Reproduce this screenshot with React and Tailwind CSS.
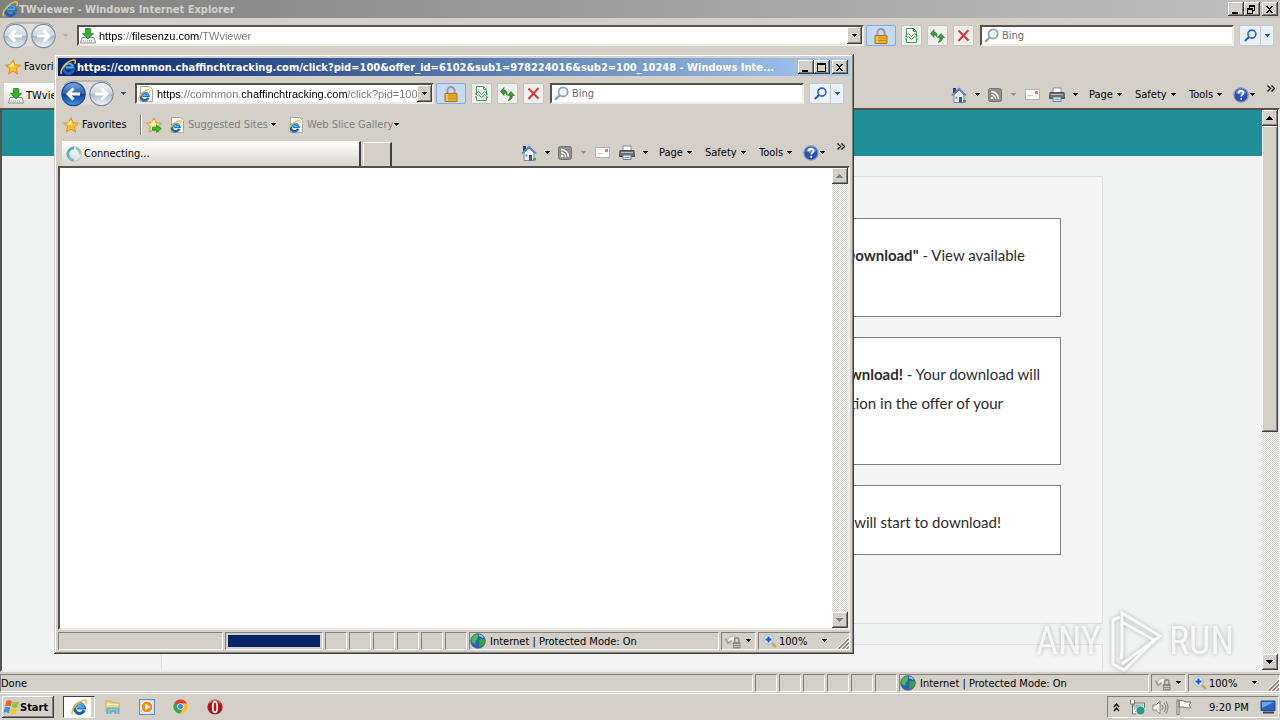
import clsx from "clsx";

const RAISED =
  "bg-[#d4d0c8] shadow-[inset_-1px_-1px_#404040,inset_1px_1px_#fff,inset_-2px_-2px_#808080]";
const SUNKEN = "border border-t-[#808080] border-l-[#808080] border-r-white border-b-white";
const SUNKEN_DEEP =
  "border-2 border-t-[#55524e] border-l-[#55524e] border-r-[#eeece8] border-b-[#eeece8]";
const DITHER =
  "bg-[repeating-conic-gradient(#ffffff_0_25%,#d4d0c8_0_50%)] bg-[length:2px_2px]";

/* ---------- icons ---------- */

function Caret({ className = "text-black" }) {
  return (
    <svg width="7" height="4" viewBox="0 0 7 4" className={clsx("shrink-0", className)} shapeRendering="crispEdges">
      <path d="M1 0h5v1H1zM2 1h3v1H2zM3 2h1v1H3z" fill="currentColor" />
    </svg>
  );
}

function IeIcon({ size = 16, page = false }) {
  return (
    <svg width={size} height={size} viewBox="0 0 16 16" className="shrink-0">
      {page && <path d="M2.5.5h9l3 3v12h-12z" fill="#fff" stroke="#a8a8a8" />}
      <g transform={page ? "translate(0 3) scale(.78)" : undefined}>
        <path
          d="M13.200 11.200A4.900 4.900 0 1 1 13.400 8.800H6"
          fill="none"
          stroke="#1a63bb"
          strokeWidth="3.200"
        />
        <path d="M4.100 8.500A4.800 4.800 0 0 1 13 7.200M6 8.400h7.500" fill="none" stroke="#4fb2f0" strokeWidth="1.700" />
        <path
          d="M1.800 15C-.6 13 3 6.400 8.400 2.900 12 .6 15.300.2 15.400 2.200c0 .9-.3 1.800-.8 2.600"
          fill="none"
          stroke="#f0bf2c"
          strokeWidth="1.600"
        />
      </g>
    </svg>
  );
}

function DownloadIcon() {
  return (
    <svg width="16" height="16" viewBox="0 0 16 16" className="shrink-0">
      <path d="M2 9.500h12l1.500 5.500H.5z" fill="#f4f4f4" stroke="#8d8d8d" />
      <path d="M3 13h10" stroke="#8aa0a0" strokeDasharray="1 1" />
      <path d="M5.500.5h5v5h3L8 11 2.500 5.500h3z" fill="#35b22d" stroke="#1f8a1c" strokeWidth=".8" />
    </svg>
  );
}

function StarIcon({ add = false }) {
  return (
    <svg width="16" height="16" viewBox="0 0 16 16" className="shrink-0">
      <path
        d="M8 .8l2.100 4.900 5.300.5-4 3.500 1.200 5.300L8 12.200 3.400 15l1.200-5.300-4-3.500 5.300-.5z"
        fill={add ? "#fbe9a0" : "#fbc02d"}
        stroke="#d98c14"
        strokeWidth=".9"
      />
      <path d="M8 3l1.300 3.500L8 8 4 7z" fill="#fff2a8" />
      {add && <path d="M6.500 10.200h4V8l4.800 3.700-4.800 3.700v-2.200h-4z" fill="#3dbb34" stroke="#1d8b1d" strokeWidth=".8" />}
    </svg>
  );
}

function TravelButtons({ active }) {
  return (
    <svg width="56" height="28" viewBox="0 0 56 28" className="shrink-0">
      <defs>
        <linearGradient id="orbLight" x1="0" y1="0" x2="0" y2="1">
          <stop offset="0" stopColor="#f4f6f9" />
          <stop offset=".48" stopColor="#ccd5df" />
          <stop offset=".5" stopColor="#a9b8c8" />
          <stop offset="1" stopColor="#f2f8fd" />
        </linearGradient>
        <linearGradient id="orbBlue" x1="0" y1="0" x2="0" y2="1">
          <stop offset="0" stopColor="#7ea7dc" />
          <stop offset=".48" stopColor="#2c62b4" />
          <stop offset=".5" stopColor="#0e3c8e" />
          <stop offset="1" stopColor="#3f9be6" />
        </linearGradient>
      </defs>
      <path d="M13.500 1h28a13 13 0 0 1 0 26c-5 0-9-3-14-3s-9 3-14 3a13 13 0 0 1 0-26z" fill="#dedcd8" />
      <path d="M4 5C7 2 10 1 13.500 1h28C45 1 48 2 51 5" fill="none" stroke="#9b9894" />
      <circle cx="13.500" cy="14" r="11.700" fill={active ? "url(#orbBlue)" : "url(#orbLight)"} stroke={active ? "#1b4a94" : "#7f8fa3"} strokeWidth="1.200" />
      <circle cx="41.500" cy="14" r="11.700" fill="url(#orbLight)" stroke="#7f8fa3" strokeWidth="1.200" />
      <path d="M20 14H8.500M13.500 8.500L8 14l5.500 5.500" fill="none" stroke="#fff" strokeWidth="3" />
      <path d="M35 14h11.500M41.500 8.500L47 14l-5.500 5.500" fill="none" stroke="#fff" strokeWidth="3" />
    </svg>
  );
}

function LockIcon() {
  return (
    <svg width="14" height="16" viewBox="0 0 14 16">
      <path d="M3.500 8V4.500a3.500 3.500 0 0 1 7 0V8" fill="none" stroke="#9c9a94" strokeWidth="2" />
      <path d="M1 7.500h12v8H1z" fill="#eeb02a" stroke="#a87412" />
      <path d="M1.500 10h11M1.500 12.500h11" stroke="#c98a18" />
      <path d="M3 8v7" stroke="#ffe18a" />
    </svg>
  );
}

function CompatIcon() {
  return (
    <svg width="13" height="15" viewBox="0 0 13 15">
      <path d="M1.500 9V.5h7l3 3V9M1.500 11v3.500h10V11" fill="#f3fbf2" stroke="#4aa052" />
      <path d="M8.500.5v3h3" fill="none" stroke="#4aa052" />
      <path d="M0 8.500l3.500-3 3 3 3-3 3.500 3M0 11.500l3.500-3 3 3 3-3 3.500 3" fill="none" stroke="#3f9a48" />
    </svg>
  );
}

function RefreshIcon() {
  return (
    <svg width="15" height="14" viewBox="0 0 15 14" fill="#3a9a35" stroke="#1f7522" strokeWidth=".6">
      <path d="M4 .5L.5 4.500 4 8.500V6c1.500 0 2.500.5 3 2 .5-3.500-1-5-3-5z" />
      <path d="M11 4.500l3.500 4H12.500c0 3-1.500 4.500-4.500 5 1.500-1 2-2.500 2-5H7.500z" />
    </svg>
  );
}

function StopIcon() {
  return (
    <svg width="13" height="13" viewBox="0 0 13 13">
      <path d="M1.500 1.500l10 10M11.500 1l-10 11" fill="none" stroke="#d33a3a" strokeWidth="2" />
    </svg>
  );
}

function Magnifier({ color, size = 14 }) {
  return (
    <svg width={size} height={size} viewBox="0 0 14 14" className="shrink-0">
      <circle cx="8.500" cy="5.500" r="4.300" fill="#eef6fc" stroke={color} strokeWidth="1.700" />
      <path d="M5.300 8.700L1 13" stroke={color} strokeWidth="2.200" />
    </svg>
  );
}

function HomeIcon() {
  return (
    <svg width="16" height="16" viewBox="0 0 16 16">
      <path d="M2 1h3v5H2z" fill="#24409c" />
      <path d="M3 8l5-5 5 5v7.500H3z" fill="#eef2fb" stroke="#7486b4" />
      <path d="M.8 8.500L8 1.500l7.200 7" fill="none" stroke="#5c7cc8" strokeWidth="1.600" />
      <path d="M8 10h3v5.500H8z" fill="#33599c" />
      <path d="M4.500 9.500h2v2h-2z" fill="#6f93cf" />
      <path d="M12 13h3v2.500h-3z" fill="#4c9a4e" />
    </svg>
  );
}

function RssIcon() {
  return (
    <svg width="14" height="14" viewBox="0 0 14 14">
      <rect x=".5" y=".5" width="13" height="13" rx="2" fill="#909090" stroke="#747474" />
      <circle cx="4" cy="10" r="1.300" fill="#fff" />
      <path d="M3 6.500A4.500 4.500 0 0 1 7.500 11M3 3.500A7.500 7.500 0 0 1 10.500 11" fill="none" stroke="#fff" strokeWidth="1.500" />
    </svg>
  );
}

function MailIcon() {
  return (
    <svg width="15" height="11" viewBox="0 0 15 11">
      <rect x=".5" y=".5" width="14" height="10" fill="#fbfbfb" stroke="#b4b0b4" />
      <path d="M10 2h3v3h-3z" fill="#e07a72" />
      <path d="M3 6.500h5" stroke="#c9c5d4" />
    </svg>
  );
}

function PrinterIcon() {
  return (
    <svg width="16" height="16" viewBox="0 0 16 16">
      <path d="M4 1h8v5H4z" fill="#fff" stroke="#8b8b8b" />
      <path d="M1 5.500h14l.5 6H.5z" fill="#6b6e74" stroke="#4c4e52" />
      <path d="M2 7.500h12" stroke="#b9bcc2" />
      <path d="M4 10h8v4.500H4z" fill="#d3e7f6" stroke="#6f7d88" />
      <path d="M5.500 12.500h5" stroke="#5ea3cf" />
    </svg>
  );
}

function HelpIcon() {
  return (
    <svg width="16" height="16" viewBox="0 0 16 16">
      <circle cx="8" cy="8" r="7.200" fill="#2a50b8" stroke="#8c9cc4" strokeWidth="1.200" />
      <path d="M3 6a5.200 5.200 0 0 1 10 0c-3 2-7 2-10 0z" fill="#6f92e2" />
      <path d="M5.600 6.200c0-3.200 4.900-3 4.900-.3 0 1.700-2.300 1.800-2.300 3.600M8.200 11v1.800" fill="none" stroke="#fff" strokeWidth="1.700" />
    </svg>
  );
}

function SpinnerIcon() {
  return (
    <svg width="16" height="16" viewBox="0 0 16 16" fill="none" strokeWidth="2.400">
      <circle cx="8" cy="8" r="6" stroke="#d5eef2" />
      <path d="M8 2a6 6 0 0 0-5 9.300" stroke="#4fb5b0" />
      <path d="M3 11.300A6 6 0 0 0 8 14" stroke="#5dc7e4" />
      <path d="M10 2.400A6 6 0 0 1 14 8" stroke="#86d0c4" />
      <circle cx="8" cy="8" r="7.300" stroke="#8aa5a8" strokeWidth=".6" />
    </svg>
  );
}

function GlobeIcon() {
  return (
    <svg width="16" height="16" viewBox="0 0 16 16" className="shrink-0">
      <circle cx="8" cy="8" r="7.300" fill="#2566b8" stroke="#3e5f8c" strokeWidth=".8" />
      <path d="M3 3c2-1.800 5-2 5.500-1S7 4 7.500 5.500 5 7 5.500 9 4 11 2.500 9.500 1 6 3 3z" fill="#4fbd4a" />
      <path d="M10 6.500c2-1.500 4.500-.5 5 1s-1.500 5.500-4 6-2-2.500-1.500-3.500S8.500 8 10 6.500z" fill="#3aa33c" />
      <path d="M9 2.500a4 4 0 0 1 4 2" stroke="#a9d6f7" strokeWidth="1.400" fill="none" />
    </svg>
  );
}

function ProtectedIcon() {
  return (
    <svg width="16" height="15" viewBox="0 0 16 15">
      <path d="M2 9C2.500 4 6 1.500 10 2v7z" fill="#f2f1ef" stroke="#b5b1ab" />
      <path d="M.5 4.500L3 9l4-2.500" fill="none" stroke="#a9a6a1" strokeWidth="1.800" />
      <path d="M9.500 8.500V6a2.200 2.200 0 0 1 4.400 0v2.500" fill="none" stroke="#8d8a85" strokeWidth="1.400" />
      <path d="M8 8h7.500v6.500H8z" fill="#8e8b86" />
      <path d="M9 10.500h5.500M9 12.500h5.500" stroke="#c9c6c1" />
    </svg>
  );
}

function ZoomIcon() {
  return (
    <svg width="14" height="14" viewBox="0 0 14 14" className="shrink-0">
      <path d="M8.500 8.500l4.500 4.500" stroke="#c89a62" strokeWidth="2.200" />
      <circle cx="5.500" cy="5.500" r="4.800" fill="#dcecf9" stroke="#9fb6cc" />
      <path d="M5.500 2.500v6M2.500 5.500h6" stroke="#1c58c4" strokeWidth="2" />
    </svg>
  );
}

function SizeGrip() {
  return (
    <svg width="12" height="12" viewBox="0 0 12 12" className="shrink-0">
      <path d="M0 12L12 0M4 12l8-8M8 12l4-4" stroke="#fff" />
      <path d="M1.500 12L12 1.500M5.500 12L12 5.500M9.500 12L12 9.500" stroke="#808080" strokeWidth="1.400" />
    </svg>
  );
}

/* ---------- window parts ---------- */

const CAPTION_GLYPHS = {
  Minimize: "M4 9h6v2H4z",
  Maximize: "M3 2h9v9H3zM4 4v6h7V4z",
  Restore: "M5 2h6v6H9V7h1V4H6v1H5zM3 5h6v6H3zM4 7v3h4V7z",
  Close: "M4 3h2v1h1v1h1V4h1V3h2v1h-1v1H9v1H8v1h1v1h1v1h1v1H9V9H8V8H7v1H6v1H4V9h1V8h1V7h1V6H6V5H5V4H4z",
};

function CaptionButton({ kind, className }) {
  return (
    <button aria-label={kind} className={clsx("h-[14px] w-4 shrink-0", RAISED, className)}>
      <svg width="15" height="13" viewBox="0 0 15 13" fillRule="evenodd" shapeRendering="crispEdges">
        <path d={CAPTION_GLYPHS[kind]} />
      </svg>
    </button>
  );
}

function TitleBar({ title, active }) {
  return (
    <div
      className={clsx(
        "flex h-[18px] shrink-0 items-center pr-[2px] pl-[2px]",
        active ? "bg-linear-to-r from-[#0a246a] to-[#a6caf0]" : "bg-linear-to-r from-[#808080] to-[#c0c0c0]"
      )}
    >
      <IeIcon size={16} />
      <h1
        className={clsx(
          "ml-[1px] min-w-0 flex-1 truncate pt-[1px] text-[11px] leading-[17px] font-bold",
          active ? "text-white" : "text-[#d4d0c8]"
        )}
      >
        {title}
      </h1>
      <CaptionButton kind="Minimize" />
      <CaptionButton kind={active ? "Maximize" : "Restore"} />
      <CaptionButton kind="Close" className="ml-[2px]" />
    </div>
  );
}

function ToolButton({ label, className, children }) {
  return (
    <button
      aria-label={label}
      className={clsx(
        "flex h-[21px] shrink-0 items-center justify-center rounded-[2px] border",
        className || "w-[21px] border-[#c0c4c8] bg-[#f0efee]"
      )}
    >
      {children}
    </button>
  );
}

function NavBar({ url, urlInk, icon, active }) {
  return (
    <div className="flex h-[34px] shrink-0 items-center pt-[1px] pr-[6px]">
      <div className="flex w-[77px] shrink-0 items-center pl-[2px]">
        <TravelButtons active={active} />
        <Caret className={active ? "ml-1 text-[#1c4f9c]" : "ml-1 text-[#b5b1ab]"} />
      </div>
      <div className={clsx("flex h-[21px] min-w-0 flex-1 items-center bg-white pl-[1px]", SUNKEN_DEEP)}>
        {icon}
        <input
          aria-label="Address"
          defaultValue={url}
          className={clsx(
            "ml-[3px] h-[17px] min-w-0 flex-1 bg-clip-text font-['Liberation_Sans',Arial,sans-serif] text-transparent outline-none",
            urlInk
          )}
        />
        <button aria-label="Show address list" className={clsx("flex h-[17px] w-[15px] items-center justify-center", RAISED)}>
          <Caret />
        </button>
      </div>
      <ToolButton label="Security report" className="ml-[2px] w-[30px] border-[#86abe6] bg-[#c4daf8]">
        <LockIcon />
      </ToolButton>
      <div className="ml-[5px] flex gap-[5px]">
        <ToolButton label="Compatibility view"><CompatIcon /></ToolButton>
        <ToolButton label="Refresh"><RefreshIcon /></ToolButton>
        <ToolButton label="Stop"><StopIcon /></ToolButton>
      </div>
      <div className={clsx("ml-[6px] flex h-[21px] w-[254px] shrink-0 items-center bg-white pl-[2px]", SUNKEN_DEEP)}>
        <Magnifier color="#93a4b4" size={15} />
        <input
          aria-label="Search"
          placeholder="Bing"
          className="ml-[3px] h-[17px] min-w-0 flex-1 outline-none placeholder:text-[#6d6d6d]"
        />
      </div>
      <div className="ml-[5px] flex h-[21px] shrink-0 rounded-[2px] border border-[#c3c9d4] bg-[#eaf0f9]">
        <button aria-label="Go" className="flex w-[21px] items-center justify-center border-r border-[#c3c9d4]">
          <Magnifier color="#2a5cc4" size={13} />
        </button>
        <button aria-label="Search options" className="flex w-3 items-center justify-center">
          <Caret className="text-[#2458a8]" />
        </button>
      </div>
    </div>
  );
}

function FavoritesBar({ children }) {
  return (
    <div className="flex h-[29px] shrink-0 items-center overflow-hidden pt-[1px] pl-[5px] whitespace-nowrap">
      <button className="flex w-[77px] items-center gap-[3px]">
        <StarIcon />
        Favorites
      </button>
      <div className="mr-1 h-5 border-l border-[#808080] border-r border-r-white" />
      <button aria-label="Add to Favorites Bar" className="mr-[7px]"><StarIcon add /></button>
      {children}
    </div>
  );
}

function FavoriteLink({ label, className }) {
  return (
    <a href="#favorite" className={clsx("flex shrink-0 items-center justify-between text-[#808080]", className)}>
      <span className="flex items-center gap-[3px]">
        <IeIcon page />
        {label}
      </span>
      <Caret />
    </a>
  );
}

function CommandBar() {
  return (
    <div className="ml-auto flex h-[27px] shrink-0 items-center self-start">
      <button aria-label="Home" className="flex w-9 items-center gap-[7px]"><HomeIcon /><Caret /></button>
      <button aria-label="Feeds" className="flex w-[38px] items-center gap-2 pl-[1px]"><RssIcon /><Caret className="text-[#98948e]" /></button>
      <button aria-label="Read mail" className="w-6"><MailIcon /></button>
      <button aria-label="Print" className="flex w-10 items-center gap-[7px]"><PrinterIcon /><Caret /></button>
      <button className="flex w-[46px] items-center gap-[3px]">Page<Caret /></button>
      <button className="flex w-[54px] items-center gap-[3px]">Safety<Caret /></button>
      <button className="flex w-11 items-center gap-[3px]">Tools<Caret /></button>
      <button aria-label="Help" className="flex w-[29px] items-center"><HelpIcon /><Caret /></button>
      <button aria-label="More commands" className="w-[18px] self-start pt-1 pl-[5px]">
        <svg width="8" height="7" viewBox="0 0 8 7" fill="none" stroke="#000" strokeWidth="1.400">
          <path d="M.5.5l3 3-3 3M4.500.5l3 3-3 3" />
        </svg>
      </button>
    </div>
  );
}

function TabRow({ label, icon }) {
  return (
    <div className="flex h-[27px] shrink-0 items-end pl-1">
      <button className="flex h-[25px] w-[299px] items-center gap-[2px] border-t border-r-2 border-t-white border-r-[#404040] bg-linear-to-b from-white to-[#d9d5ce] pl-1">
        {icon}
        {label}
      </button>
      <button aria-label="New tab" className="ml-[2px] h-6 w-[29px] border-t border-r-2 border-l border-t-white border-l-white border-r-[#404040]" />
      <CommandBar />
    </div>
  );
}

function ScrollButton({ label, up, disabled }) {
  return (
    <button
      aria-label={label}
      disabled={disabled}
      className={clsx("flex h-4 w-4 shrink-0 items-center justify-center", RAISED)}
    >
      <svg width="8" height="5" viewBox="0 0 8 5" shapeRendering="crispEdges">
        <path d={up ? "M3 0h1v1h1v1h1v1h1v1H0V3h1V2h1V1h1z" : "M0 0h7v1H6v1H5v1H4v1H3V3H2V2H1V1H0z"} fill={disabled ? "#808080" : "#000"} />
      </svg>
    </button>
  );
}

function ScrollBar({ disabled, children }) {
  return (
    <div className={clsx("flex w-4 shrink-0 flex-col", DITHER)}>
      <ScrollButton label="Scroll up" up disabled={disabled} />
      <div className="flex-1">{children}</div>
      <ScrollButton label="Scroll down" disabled={disabled} />
    </div>
  );
}

function StatusBar({ text, loading }) {
  return (
    <div className="mt-[2px] flex h-[18px] shrink-0 items-stretch gap-[2px]">
      <div className={clsx("min-w-0 flex-1 pt-[1px] leading-4", SUNKEN)}>{text}</div>
      {loading && (
        <div className={clsx("w-[98px] p-[2px]", SUNKEN)}>
          <div role="progressbar" aria-label="Loading" className="h-full bg-[#0a246a]" />
        </div>
      )}
      {[0, 1, 2, 3, 4, 5].map((i) => (
        <div key={i} className={clsx("w-[22px]", SUNKEN)} />
      ))}
      <div className={clsx("flex w-[250px] items-center gap-1", SUNKEN)}>
        <GlobeIcon />
        <span className="pt-[1px]">Internet | Protected Mode: On</span>
      </div>
      <button aria-label="Protected mode" className={clsx("flex w-[35px] items-center gap-1 pl-[3px]", SUNKEN)}>
        <ProtectedIcon />
        <Caret />
      </button>
      <div className={clsx("flex w-[92px] items-center pl-1", SUNKEN)}>
        <button className="flex items-center gap-[2px]">
          <ZoomIcon />
          <span className="w-10 pt-[1px] text-left">100%</span>
          <Caret />
        </button>
        <span className="ml-auto self-end"><SizeGrip /></span>
      </div>
    </div>
  );
}

/* ---------- page behind the popup ---------- */

const STEPS = [
  [
    { strong: '"Download"', rest: " - View available", pad: "pr-[35px]" },
    { rest: "\u00a0" },
  ],
  [
    { strong: "Download!", rest: " - Your download will", pad: "pr-[20px]" },
    { rest: "tion in the offer of your", pad: "pr-[57px]" },
    { rest: "\u00a0" },
  ],
  [{ rest: "will start to download!", pad: "pr-[59px]" }],
];

function DownloadPage() {
  return (
    <main className="min-w-0 flex-1 overflow-hidden bg-[#f0f3f2] font-[Lato,sans-serif] text-[15px] leading-[29px] text-[#2c2c2c]">
      <div className="h-[46px] bg-[#1f909a]" />
      <div className="mx-auto mt-5 w-3/4 max-w-[942px] border border-[#dedfdf] bg-[#f4f4f4] px-[41px] pt-[41px] pb-[68px]">
        <div className="flex flex-col gap-5">
          {STEPS.map((lines, i) => (
            <section key={i} className="border border-[#7d7d7d] bg-white pt-[22px] pb-[17px]">
              {lines.map((line, j) => (
                <p key={j} className={clsx("text-right whitespace-nowrap", line.pad)}>
                  {line.strong && <strong>{line.strong}</strong>}
                  {line.rest}
                </p>
              ))}
            </section>
          ))}
        </div>
      </div>
      <div className="mx-auto mt-5 h-24 w-3/4 max-w-[942px] border border-[#dedfdf] bg-[#f4f4f4]" />
    </main>
  );
}

function Watermark() {
  return (
    <div className="pointer-events-none absolute right-[46px] bottom-[47px] flex items-center gap-[5px] font-['Liberation_Sans_Narrow','Roboto_Condensed',sans-serif] text-[38px] leading-none text-white/80 drop-shadow-[0_0_2px_rgba(0,0,0,0.3)]">
      <span>ANY</span>
      <svg width="58" height="64" viewBox="0 0 58 64" fill="none" stroke="#fff" strokeOpacity=".85" strokeWidth="3">
        <path d="M16 42V4l38 23-38 28" />
        <path d="M16 13l32 18M50 30L18 61l-11-6V11l7-3" />
        <path d="M16 42l-1 8" />
      </svg>
      <span>RUN</span>
    </div>
  );
}

/* ---------- taskbar ---------- */

function StartFlag() {
  return (
    <svg width="17" height="16" viewBox="0 0 17 16">
      <path d="M3.500 2C5.500.8 7 1 9 2L7.500 7.500C5.500 6.500 4 6.500 2 7.500z" fill="#e8622c" />
      <path d="M10 2.500c2 1 4 1 6 0L14.500 8c-2 1-4 .8-6 0z" fill="#8cc63e" />
      <path d="M1.800 8.500c2-1 3.500-1 5.500 0L5.800 14c-2-1-3.500-1-5.500 0z" fill="#4a8fdc" />
      <path d="M8.300 9c2 1 4 1 6 0l-1.500 5.500c-2 1-4 1-6 0z" fill="#f9c62c" />
    </svg>
  );
}

function FolderIcon() {
  return (
    <svg width="16" height="16" viewBox="0 0 16 16">
      <path d="M1 2h5l1 2h7v9H1z" fill="#f2d577" stroke="#c9a545" strokeWidth=".8" />
      <path d="M1.500 5.500h12" stroke="#fff6cc" strokeWidth="1.500" />
      <path d="M2.500 15V9.500h11V15M5.500 15v-3h5v3" fill="none" stroke="#66b0dd" strokeWidth="2" />
    </svg>
  );
}

function MediaIcon() {
  return (
    <svg width="16" height="16" viewBox="0 0 16 16">
      <rect x=".5" y=".5" width="15" height="15" fill="#cfe1f2" stroke="#5a8fc4" />
      <circle cx="8" cy="8" r="5.800" fill="#f08a1c" stroke="#fff" strokeWidth=".8" />
      <path d="M6.200 4.800v6.400L11.500 8z" fill="#fff" />
    </svg>
  );
}

function ChromeIcon() {
  return (
    <svg width="15" height="15" viewBox="0 0 16 16">
      <circle cx="8" cy="8" r="7.500" fill="#fbc116" />
      <path d="M8 8L1.500 4.200A7.500 7.500 0 0 1 14.800 4.800H8z" fill="#e33b2e" />
      <path d="M8 8L1.500 4.200A7.500 7.500 0 0 0 7.500 15.500L11 9.700z" fill="#2da94f" />
      <circle cx="8" cy="8" r="3.500" fill="#fff" />
      <circle cx="8" cy="8" r="2.700" fill="#4184f3" />
    </svg>
  );
}

function OperaIcon() {
  return (
    <svg width="16" height="16" viewBox="0 0 16 16">
      <circle cx="8" cy="8" r="7.600" fill="#b3151b" />
      <path d="M2.500 4a7 7 0 0 1 11 0" stroke="#e8676b" strokeWidth="1.500" fill="none" />
      <ellipse cx="8" cy="8" rx="2.200" ry="5.400" fill="#b3151b" stroke="#fff" strokeWidth="1.700" />
    </svg>
  );
}

const PINNED = [
  ["Windows Explorer", FolderIcon],
  ["Media Player", MediaIcon],
  ["Chrome", ChromeIcon],
  ["Opera", OperaIcon],
];

function Tray() {
  return (
    <div className={clsx("ml-auto flex h-[22px] items-center", SUNKEN)}>
      <button aria-label="Show hidden icons" className="flex w-[20px] justify-center pr-1">
        <svg width="7" height="9" viewBox="0 0 7 9" fill="none" stroke="#000" strokeWidth="1.400">
          <path d="M1 4l2.500-3L6 4M1 8l2.500-3L6 8" />
        </svg>
      </button>
      <svg width="17" height="17" viewBox="0 0 17 17" className="mx-[1px]">
        <path d="M5 4h10.500v8.500H5z" fill="#e4efec" stroke="#5e7874" />
        <path d="M6.500 5.500h7.500v5.500H6.500z" fill="#7dbdb0" />
        <circle cx="11.500" cy="11.500" r="4.500" fill="#2e9a86" stroke="#def3ee" strokeWidth=".8" />
        <path d="M1.500 1v4h4V1M3.500 5v10H7" fill="#fff" stroke="#6d6d6d" />
      </svg>
      <svg width="17" height="15" viewBox="0 0 17 15" className="mx-[5px]" fill="none" stroke="#7e7e7e">
        <path d="M1 5h3l4-4v13l-4-4H1z" fill="#fff" />
        <path d="M10 5q2 2.500 0 5M12 3q3.500 4.500 0 9M14 1.500q4 6 0 12" />
      </svg>
      <svg width="16" height="16" viewBox="0 0 16 16" className="ml-[2px]" fill="#fff" stroke="#6e6e6e">
        <path d="M1 1h2v14.500H1zM3 2c3-1.500 5 .5 7 1h5l-2 3 2 2.500C12 10 9 8 7 8H3z" />
      </svg>
      <time className="ml-[17px] w-[50px] pt-[1px] whitespace-nowrap">9:20 PM</time>
      <button aria-label="Show desktop" className="mr-[1px]">
        <svg width="18" height="14" viewBox="0 0 18 14">
          <path d="M2 1h14v9.500H2z" fill="#2a66c0" stroke="#1d4a90" />
          <path d="M3 2h12L3 8z" fill="#6ea2e4" />
          <path d="M4 12.500h11" stroke="#3a3f4a" strokeWidth="2" />
        </svg>
      </button>
    </div>
  );
}

function Taskbar() {
  return (
    <footer className="flex h-7 shrink-0 items-center px-[1px] pt-[2px] shadow-[inset_0_1px_#d4d0c8,inset_0_2px_#fff]">
      <button className={clsx("ml-[1px] flex h-[22px] w-[52px] items-center pl-[1px] font-bold", RAISED)}>
        <StartFlag />
        <span className="pt-[1px]">Start</span>
      </button>
      <button
        aria-label="Internet Explorer"
        className="ml-[9px] flex h-[22px] w-[32px] items-center justify-center border border-t-[#404040] border-r-white border-b-white border-l-[#404040] bg-white shadow-[inset_-3px_0_#d4d0c8]"
      >
        <IeIcon />
      </button>
      <nav className="ml-[10px] flex">
        {PINNED.map(([name, Icon]) => (
          <button key={name} aria-label={name} className="flex w-[34px] justify-start">
            <Icon />
          </button>
        ))}
      </nav>
      <Tray />
    </footer>
  );
}

export default function App() {
  return (
    <div className="relative flex h-screen flex-col overflow-hidden bg-[#d4d0c8] font-['DejaVu_Sans_Condensed','DejaVu_Sans',sans-serif] text-[11px] leading-4 text-black">
      <div className="flex min-h-0 flex-1 flex-col">
        <TitleBar title="TWviewer - Windows Internet Explorer" />
        <NavBar
          url="https://filesenzu.com/TWviewer"
          urlInk="bg-[linear-gradient(90deg,#000_24px,#777_24px_33px,#000_33px_100px,#777_100px)]"
          icon={<DownloadIcon />}
        />
        <FavoritesBar />
        <TabRow label="TWviewer" icon={<DownloadIcon />} />
        <div className={clsx("flex min-h-0 flex-1", SUNKEN_DEEP)}>
          <DownloadPage />
          <ScrollBar>
            <div className={clsx("h-[58%]", RAISED)} />
          </ScrollBar>
        </div>
        <StatusBar text="Done" />
      </div>
      <Taskbar />
      <Watermark />

      {/* Popup browser window */}
      <div
        role="dialog"
        aria-label="Popup window"
        className="absolute top-[54px] left-[54px] flex h-[600px] w-[800px] flex-col bg-[#d4d0c8] p-1 shadow-[inset_-1px_-1px_#404040,inset_1px_1px_#d4d0c8,inset_-2px_-2px_#808080,inset_2px_2px_#fff]"
      >
        <TitleBar
          active
          title="https://comnmon.chaffinchtracking.com/click?pid=100&offer_id=6102&sub1=978224016&sub2=100_10248 - Windows Inte..."
        />
        <NavBar
          active
          url="https://comnmon.chaffinchtracking.com/click?pid=100"
          urlInk="bg-[linear-gradient(90deg,#000_24px,#777_24px_85px,#000_85px_191px,#777_191px)]"
          icon={<IeIcon page />}
        />
        <FavoritesBar>
          <FavoriteLink label="Suggested Sites" className="mr-[11px] w-[108px]" />
          <FavoriteLink label="Web Slice Gallery" className="w-[112px]" />
        </FavoritesBar>
        <TabRow label="Connecting..." icon={<SpinnerIcon />} />
        <div className={clsx("flex min-h-0 flex-1", SUNKEN_DEEP)}>
          <div className="flex-1 bg-white" />
          <ScrollBar disabled />
        </div>
        <StatusBar loading />
      </div>
    </div>
  );
}
